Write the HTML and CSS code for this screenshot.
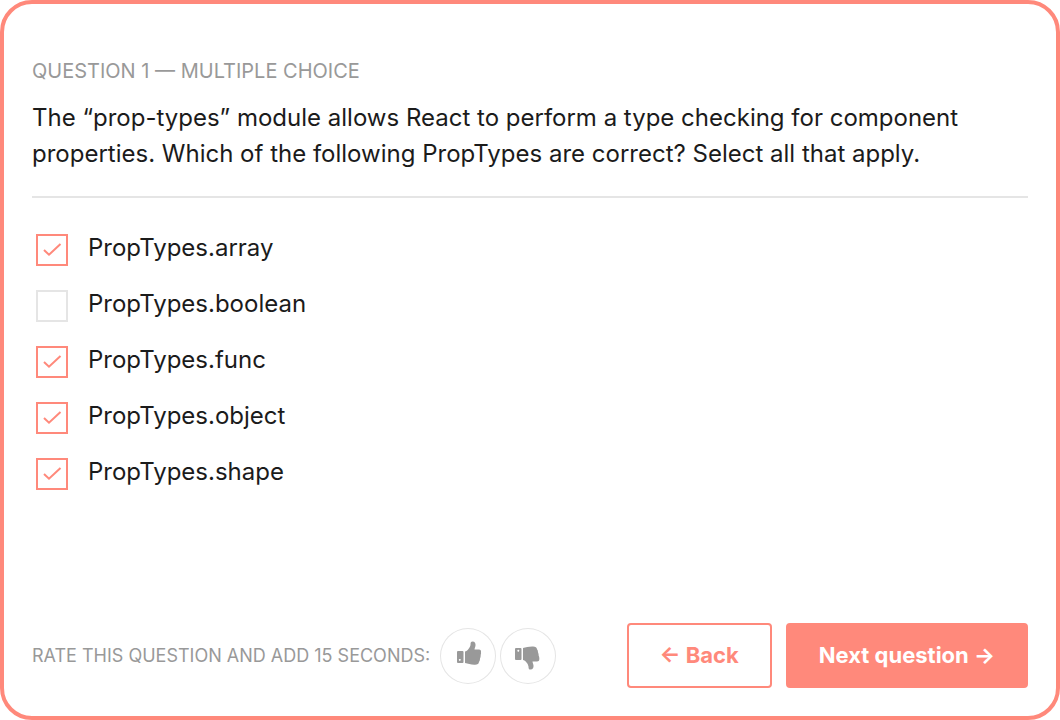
FILE: index.html
```html
<!DOCTYPE html>
<html lang="en">
<head>
<meta charset="utf-8">
<meta name="viewport" content="width=device-width, initial-scale=1">
<title>Question 1</title>
<link rel="stylesheet" href="styles.css">
</head>
<body>
<svg class="sprite" aria-hidden="true">
  <symbol id="tick" viewBox="0 0 32 32"><path d="M8 16 L13 20.700 L24.500 10" fill="none" stroke="currentColor" stroke-width="2"/></symbol>
</svg>
<form class="quiz">
  <header class="question">
    <p class="eyebrow">QUESTION 1 — MULTIPLE CHOICE</p>
    <h1 class="prompt">The “prop-types” module allows React to perform a type checking for component properties. Which of the following PropTypes are correct? Select all that apply.</h1>
  </header>
  <div class="options">
    <label class="option"><input class="box" type="checkbox" name="answer" checked><svg class="tick"><use href="#tick"/></svg><span>PropTypes.array</span></label>
    <label class="option"><input class="box" type="checkbox" name="answer"><svg class="tick"><use href="#tick"/></svg><span>PropTypes.boolean</span></label>
    <label class="option"><input class="box" type="checkbox" name="answer" checked><svg class="tick"><use href="#tick"/></svg><span>PropTypes.func</span></label>
    <label class="option"><input class="box" type="checkbox" name="answer" checked><svg class="tick"><use href="#tick"/></svg><span>PropTypes.object</span></label>
    <label class="option"><input class="box" type="checkbox" name="answer" checked><svg class="tick"><use href="#tick"/></svg><span>PropTypes.shape</span></label>
  </div>
  <footer class="footer">
    <div class="rating">
      <span class="rating-label">RATE THIS QUESTION AND ADD 15 SECONDS:</span>
      <button class="rate" type="button" aria-label="Thumbs up">
        <svg class="thumb" viewBox="0 0 56 56"><path fill="currentColor" fill-rule="evenodd" d="M18 23h4.500q1 0 1 1v10q0 1-1 1H18q-1 0-1-1V24q0-1 1-1zM19.800 31a.9.9 0 1 0 .01 0zM25 23.500C27.500 23 30 19.500 30.500 17C30.500 14 31 13.500 32.500 13.500C35 13.500 35.700 15.500 35.500 17.500C35.300 19.300 34.500 20.500 34.500 21.500H39C40.500 21.500 41.300 22.500 41 24C41.200 25 41 26 40.700 27C40.700 28.500 40.500 29.500 40 30.500C40 32 39.700 33 39 33.800C38.800 36 37.500 36.800 35 36.800C31 37 28 35.500 25 35z"/></svg>
      </button>
      <button class="rate" type="button" aria-label="Thumbs down">
        <svg class="thumb" viewBox="0 0 56 56"><path fill="currentColor" fill-rule="evenodd" d="M16 20h4.500q1 0 1 1v10q0 1-1 1H16q-1 0-1-1V21q0-1 1-1zM18.300 21.800a.9.9 0 1 0 .01 0zM23 20C26 19.500 29 18.300 33 18.500C35.500 18.500 36.800 19.300 37 21.300C37.700 22 38 23 38 24.300C38.500 25.300 38.700 26.500 38.700 27.700C39.200 28.700 39.500 30 39.300 31.300C39.300 32.800 38.500 33.500 37 33.500H32.500C32.500 34.500 33.300 35.500 33.500 37.500C33.700 39.800 33 41.500 30.500 41.500C29 41.500 28.500 41 28.500 38.500C28 35.700 25.500 32.500 23 32z"/></svg>
      </button>
    </div>
    <div class="actions">
      <button class="btn btn-outline" type="button">← Back</button>
      <button class="btn btn-solid" type="submit">Next question →</button>
    </div>
  </footer>
</form>
</body>
</html>
```
FILE: styles.css
```css
:root {
  --coral: #ff897b;
  --gray: #999;
  --line: #e5e5e5;
}

* { box-sizing: border-box; }

body {
  margin: 0;
  background: #fff;
  color: #1b1b1b;
  font-family: Inter, "Liberation Sans", sans-serif;
}

.sprite { display: none; }

.quiz {
  display: flex;
  flex-direction: column;
  min-height: 100vh;
  padding: 52px 28px 28px;
  border: 4px solid var(--coral);
  border-radius: 32px;
}

.question {
  padding-bottom: 24px;
  border-bottom: 2px solid var(--line);
}

.eyebrow {
  margin: 0 0 14px;
  color: var(--gray);
  font-size: 20px;
  line-height: 30px;
}

.prompt {
  margin: 0;
  font-size: 24px;
  font-weight: 400;
  line-height: 36px;
}

.options {
  display: grid;
  justify-items: start;
  gap: 20px;
  padding: 32px 4px;
}

.option {
  display: grid;
  grid-template-columns: 32px auto;
  column-gap: 20px;
  font-size: 24px;
  line-height: 36px;
}

.box,
.tick {
  grid-area: 1 / 1;
  width: 32px;
  height: 32px;
  margin: 4px 0 0;
}

.box {
  appearance: none;
  border: 2px solid var(--line);
}

.box:checked { border-color: var(--coral); }

.tick {
  color: var(--coral);
  pointer-events: none;
  visibility: hidden;
}

.box:checked + .tick { visibility: visible; }

.footer {
  display: flex;
  align-items: center;
  justify-content: space-between;
  flex-wrap: wrap;
  gap: 14px;
  margin-top: auto;
}

.rating {
  display: flex;
  align-items: center;
  gap: 4px;
}

.rating-label {
  margin-right: 6px;
  color: var(--gray);
  font-size: 18px;
}

.rate {
  width: 56px;
  height: 56px;
  padding: 0;
  border: 0;
  border-radius: 50%;
  box-shadow: inset 0 0 0 1px var(--line);
  background: none;
  color: var(--gray);
}

.thumb {
  display: block;
  width: 56px;
  height: 56px;
}

.actions {
  display: flex;
  gap: 14px;
}

.btn {
  padding: 16px 31px;
  border: 2px solid var(--coral);
  border-radius: 4px;
  font: 700 22px/29px Inter, "Liberation Sans", sans-serif;
}

.btn-outline {
  background: #fff;
  color: var(--coral);
}

.btn-solid {
  background: var(--coral);
  color: #fff;
}
```
